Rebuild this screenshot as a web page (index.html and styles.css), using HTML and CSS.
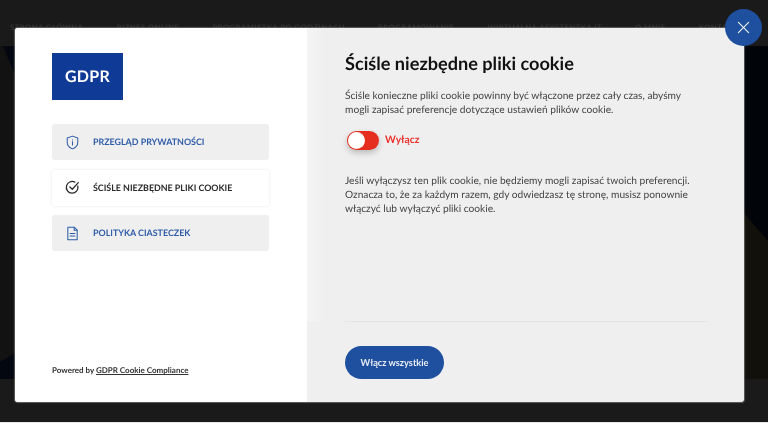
FILE: index.html
```html
<!DOCTYPE html>
<html lang="pl">
<head>
<meta charset="utf-8">
<title>GDPR</title>
<link rel="stylesheet" href="styles.css">
</head>
<body>
<div class="page">
  <header class="topbar">
    <nav class="site-nav">
      <span>STRONA GŁÓWNA</span>
      <span>BIZNES ONLINE</span>
      <span>PROGRAMISTKA PO GODZINACH</span>
      <span>PROGRAMOWANIE</span>
      <span>WIRTUALNA ASYSTENTKA IT</span>
      <span>O MNIE</span>
      <span>KONTAKT</span>
    </nav>
  </header>
  <main class="hero">
    <svg class="hero-art" viewBox="0 0 768 333" preserveAspectRatio="none" aria-hidden="true">
      <polygon points="3,0 60,0 60,60 15,29" fill="#020710"/>
      <polygon points="0,316 30,298 60,290 60,333 0,333" fill="#020710"/>
      <rect x="744" y="0" width="24" height="333" fill="#01050a"/>
      <polygon points="744,167 768,195 768,333 744,333" fill="#12100a"/>
    </svg>
  </main>
  <footer class="bottombar"></footer>
</div>

<section class="modal">
  <aside class="side">
    <div class="logo">GDPR</div>
    <ul class="menu">
      <li class="menu-item">
        <svg class="menu-icon" viewBox="0 0 16 16" fill="none" stroke="currentColor" stroke-width="1.1" stroke-linejoin="round" stroke-linecap="round"><path d="M8 1.2 13.6 3.2V8c0 3.4-2.6 5.7-5.6 6.8C5 13.700 2.400 11.400 2.400 8V3.200Z"/><path d="M8 7.300V10.600"/><path d="M8 5.100V5.300"/></svg>
        <span>Przegląd prywatności</span>
      </li>
      <li class="menu-item is-active">
        <svg class="menu-icon" viewBox="0 0 16 16" fill="none" stroke="currentColor" stroke-width="1.4" stroke-linecap="round" stroke-linejoin="round"><path d="M13.700 6.600A6.200 6.200 0 1 1 10.500 2.300"/><path d="M5.200 7.400 7.800 9.800 14.200 2.800"/></svg>
        <span>Ściśle niezbędne pliki cookie</span>
      </li>
      <li class="menu-item">
        <svg class="menu-icon" viewBox="0 0 16 16" fill="none" stroke="currentColor" stroke-width="1.1" stroke-linejoin="round" stroke-linecap="round"><path d="M3 1.300H9.800L13 4.500V14.700H3Z"/><path d="M9.800 1.300V4.500H13"/><path d="M5.400 8H10.600"/><path d="M5.400 10.700H10.600"/></svg>
        <span>Polityka ciasteczek</span>
      </li>
    </ul>
    <p class="powered">Powered by <a href="#">GDPR Cookie Compliance</a></p>
  </aside>
  <div class="panel">
    <div class="panel-body">
      <h1>Ściśle niezbędne pliki cookie</h1>
      <p class="text">Ściśle konieczne pliki cookie powinny być włączone przez cały czas, abyśmy mogli zapisać preferencje dotyczące ustawień plików cookie.</p>
      <div class="switch-row">
        <span class="switch"><span class="knob"></span></span>
        <span class="switch-label">Wyłącz</span>
      </div>
      <p class="text">Jeśli wyłączysz ten plik cookie, nie będziemy mogli zapisać twoich preferencji. Oznacza to, że za każdym razem, gdy odwiedzasz tę stronę, musisz ponownie włączyć lub wyłączyć pliki cookie.</p>
    </div>
    <div class="panel-foot">
      <button class="accept" type="button">Włącz wszystkie</button>
    </div>
  </div>
  <button class="close" type="button" aria-label="Zamknij">
    <svg viewBox="0 0 14 14" fill="none" stroke="currentColor" stroke-width="1.200" stroke-linecap="round"><path d="M1.500 1.500 12.500 12.500"/><path d="M12.500 1.500 1.500 12.500"/></svg>
  </button>
</section>
</body>
</html>
```

FILE: styles.css
```css
* { box-sizing: border-box; }
html, body { margin: 0; height: 100%; overflow: hidden; background: #e8e8e8; }
body {
  position: relative;
  width: 768px;
  height: 423px;
  font-family: "Lato", "Noto Sans", sans-serif;
  text-rendering: geometricPrecision;
  filter: blur(0.45px);
}
.page { display: flex; flex-direction: column; height: 422px; }
.topbar { height: 46px; background: #1a1a1a; padding: 22px 10px 0; flex: none; }
.site-nav { display: flex; gap: 33px; font-size: 7.600px; font-weight: 700; letter-spacing: 0.5px; color: #333; white-space: nowrap; }
.hero { flex: 1; background: #121212; position: relative; }
.hero-art { position: absolute; inset: 0; width: 100%; height: 100%; display: block; }
.bottombar { height: 43px; background: #1a1a1a; flex: none; }

.modal {
  position: absolute;
  left: 15px;
  top: 28px;
  width: 729px;
  height: 374px;
  display: grid;
  grid-template-columns: 292px 1fr;
  border-radius: 3px;
  background: #efefef;
  box-shadow: 0 0 1px 1px rgba(150, 150, 150, 0.55);
}
.side {
  background: #fff;
  border-radius: 3px 0 0 3px;
  padding: 25px 38px 27px 37px;
  display: flex;
  flex-direction: column;
}
.logo {
  width: 71px;
  height: 47px;
  background: #0f3a96;
  color: #fff;
  font-size: 16px;
  font-weight: 700;
  letter-spacing: 0.3px;
  display: flex;
  align-items: center;
  justify-content: center;
}
.menu { list-style: none; margin: 24px 0 0; padding: 0; display: flex; flex-direction: column; gap: 9.500px; }
.menu-item {
  height: 36px;
  background: #efefef;
  border-radius: 3px;
  display: flex;
  align-items: center;
  gap: 13px;
  padding-left: 13px;
  color: #2f5ca8;
  font-size: 8.900px;
  font-weight: 700;
  text-transform: uppercase;
  line-height: 12px;
}
.menu-item.is-active { background: #fff; color: #2a2a2a; box-shadow: 0 0 3px rgba(0, 0, 0, 0.1); }
.menu-icon { width: 15px; height: 15px; flex: none; }
.powered { margin: auto 0 0; font-size: 8px; font-weight: 700; color: #333; }
.powered a { color: #333; }

.panel { display: flex; flex-direction: column; min-width: 0; }
.panel-body {
  height: 293px;
  padding: 24px 19px 0 38px;
  background: linear-gradient(90deg, #f5f5f5, #efefef 16px);
  display: flex;
  flex-direction: column;
  align-items: flex-start;
}
h1 { margin: 0; font-size: 18.150px; line-height: 22px; font-weight: 700; color: #111; }
.text { margin: 0; font-size: 10.200px; line-height: 14.300px; color: #444; max-width: 362px; }
h1 + .text { margin-top: 15px; }
.switch-row { display: flex; align-items: center; gap: 6px; margin-top: 13px; margin-bottom: 24px; padding-left: 2px; }
.switch {
  width: 32px;
  height: 19px;
  border-radius: 10px;
  background: #e52d20;
  padding: 1px;
  box-shadow: 0 3px 6px rgba(0, 0, 0, 0.22);
  display: block;
}
.knob { display: block; width: 17px; height: 17px; border-radius: 50%; background: #fff; }
.switch-label { color: #e9302a; font-size: 10.300px; font-weight: 700; }
.panel-foot { margin: 0 37px 0 38px; border-top: 1.500px solid #e4e4e4; padding-top: 24px; }
.accept {
  width: 99px;
  height: 32.500px;
  border: 0;
  border-radius: 17px;
  background: #1f4f9f;
  color: #e9edf5;
  font: 700 9.200px "Lato", "Noto Sans", sans-serif;
  padding: 0;
}
.close {
  position: absolute;
  right: -18px;
  top: -19px;
  width: 37px;
  height: 37px;
  border: 0;
  border-radius: 50%;
  background: #1f4f9f;
  color: #f0f4fa;
  padding: 12px;
}
.close svg { width: 13px; height: 13px; display: block; }
```
